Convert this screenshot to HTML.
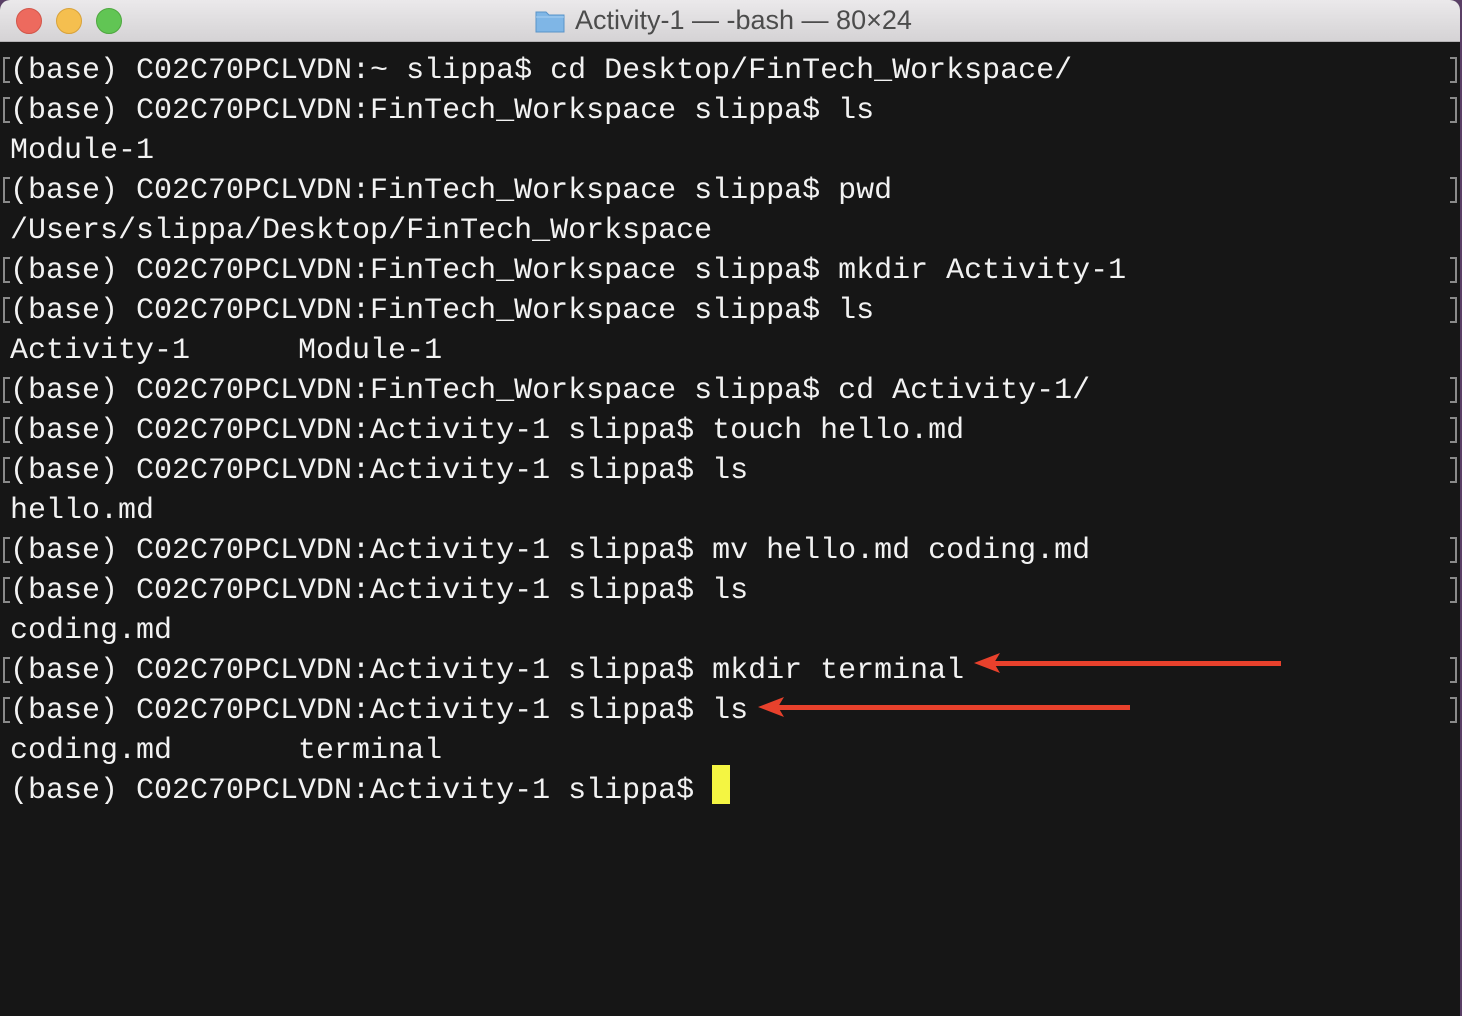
<!DOCTYPE html>
<html><head><style>
html,body{margin:0;padding:0;width:1462px;height:1016px;overflow:hidden;background:#5a3f66}
.win{position:absolute;left:0;top:0;width:1460px;height:1016px;background:#161616;border-radius:10px 10px 0 0;overflow:hidden}
.tb{position:absolute;left:0;top:0;width:1460px;height:41px;background:linear-gradient(#ebe9eb,#d5d3d5);border-bottom:1px solid #b5b3b5}
.dot{position:absolute;top:8px;width:24px;height:24px;border-radius:50%}
.title{position:absolute;left:575px;top:5px;font:27px "Liberation Sans",sans-serif;color:#4c4c4c;white-space:nowrap}
.t{position:absolute;left:10px;font:30px/40px "Liberation Mono",monospace;color:#f2f2f2;white-space:pre;letter-spacing:0}
.bl,.br{position:absolute;width:5px;height:22px;border:2px solid #8a8a8a}
.bl{left:3px;border-right:none}
.br{left:1450px;border-left:none}
.arr{position:absolute;height:5px;background:#e8412c}
</style></head><body>
<div class="win">
<div class="tb">
<div class="dot" style="left:16px;background:#ed6a5e;border:1px solid #d2564a"></div>
<div class="dot" style="left:56px;background:#f5bf4f;border:1px solid #d8a23a"></div>
<div class="dot" style="left:96px;background:#61c554;border:1px solid #4ea73f"></div>
<svg style="position:absolute;left:535px;top:9px" width="30" height="24" viewBox="0 0 30 24"><path d="M1 3h10l3 3h15v17H1z" fill="#7fb6e6" stroke="#5a94c8"/><path d="M1 8h28" stroke="#a8d0f2"/></svg>
<div class="title">Activity-1 — -bash — 80×24</div>
</div>
<div id="lines"></div>
</div>
<script>
var L=["[(base) C02C70PCLVDN:~ slippa$ cd Desktop/FinTech_Workspace/","[(base) C02C70PCLVDN:FinTech_Workspace slippa$ ls","Module-1","[(base) C02C70PCLVDN:FinTech_Workspace slippa$ pwd","/Users/slippa/Desktop/FinTech_Workspace","[(base) C02C70PCLVDN:FinTech_Workspace slippa$ mkdir Activity-1","[(base) C02C70PCLVDN:FinTech_Workspace slippa$ ls","Activity-1      Module-1","[(base) C02C70PCLVDN:FinTech_Workspace slippa$ cd Activity-1/","[(base) C02C70PCLVDN:Activity-1 slippa$ touch hello.md","[(base) C02C70PCLVDN:Activity-1 slippa$ ls","hello.md","[(base) C02C70PCLVDN:Activity-1 slippa$ mv hello.md coding.md","[(base) C02C70PCLVDN:Activity-1 slippa$ ls","coding.md","[(base) C02C70PCLVDN:Activity-1 slippa$ mkdir terminal","[(base) C02C70PCLVDN:Activity-1 slippa$ ls","coding.md       terminal","(base) C02C70PCLVDN:Activity-1 slippa$ "];
var h="";
L.forEach(function(s,i){var top=51+i*40;if(s[0]=="["){s=s.slice(1);h+='<div class="bl" style="top:'+(top+6)+'px"></div><div class="br" style="top:'+(top+6)+'px"></div>';}
h+='<div class="t" style="top:'+top+'px">'+s+'</div>';});
h+='<div style="position:absolute;left:712px;top:765px;width:18px;height:39px;background:#f4f542"></div>';
h+='<div class="arr" style="left:990px;top:661px;width:291px"></div><svg style="position:absolute;left:972px;top:651px" width="30" height="24"><path d="M2 12L28 2L22 12L28 22Z" fill="#e8412c"/></svg>';
h+='<div class="arr" style="left:775px;top:705px;width:355px"></div><svg style="position:absolute;left:756px;top:695px" width="30" height="24"><path d="M2 12L28 2L22 12L28 22Z" fill="#e8412c"/></svg>';
document.getElementById("lines").innerHTML=h;
</script>
</body></html>
